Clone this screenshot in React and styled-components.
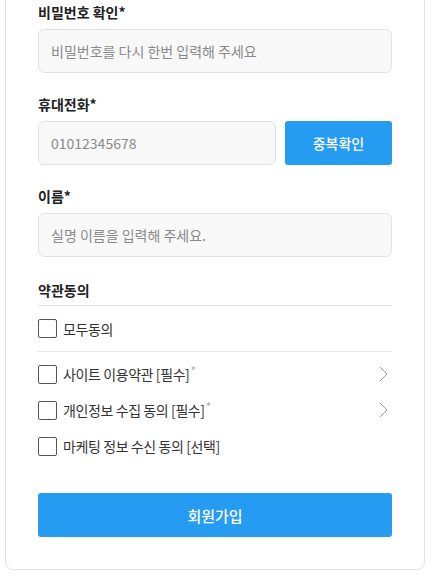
import React from "react";
import styled, { createGlobalStyle } from "styled-components";

const GlobalStyle = createGlobalStyle`
  html, body {
    margin: 0;
    padding: 0;
    background: #fff;
  }
  body {
    font-family: "Noto Sans CJK KR", "Noto Sans", sans-serif;
    color: #222;
  }
  * { box-sizing: border-box; }
`;

const Page = styled.div`
  padding: 0 7px 6px 5px;
`;

const Card = styled.div`
  border: 1px solid #dfe3ea;
  border-top: none;
  border-radius: 0 0 8px 8px;
  padding: 1px 32px 32px;
`;

const Field = styled.div`
  margin-bottom: 20px;
`;

const Label = styled.div`
  font-size: 14px;
  font-weight: 700;
  line-height: 22px;
  color: #222;
  margin-bottom: 6px;
`;

const Row = styled.div`
  display: flex;
  gap: 9px;
`;

const Input = styled.input`
  flex: 1;
  min-width: 0;
  width: 100%;
  height: 44px;
  padding: 0 12px;
  border: 1px solid #dfe3ea;
  border-radius: 6px;
  background: #f8f8f9;
  font-family: inherit;
  font-size: 14px;
  color: #333;
  outline: none;
  &::placeholder {
    color: #8a8a8a;
  }
`;

const BlueButton = styled.button`
  border: none;
  border-radius: 3px;
  background: #259cf2;
  color: #fff;
  font-family: inherit;
  font-size: ${(p) => (p.$big ? "15px" : "14px")};
  font-weight: 500;
  height: 44px;
  width: ${(p) => (p.$wide ? "100%" : "107px")};
  flex-shrink: 0;
  cursor: pointer;
`;

const TermsTitle = styled.div`
  font-size: 14px;
  font-weight: 700;
  line-height: 22px;
  padding-top: 2px;
  padding-bottom: 4px;
  border-bottom: 1px solid #e3e5e9;
`;

const AllRow = styled.label`
  display: flex;
  align-items: center;
  height: 46px;
  border-bottom: 1px solid #e3e5e9;
  margin-bottom: 4px;
`;

const TermRow = styled.label`
  display: flex;
  align-items: center;
  height: 36px;
`;

const Box = styled.span`
  width: 19px;
  height: 19px;
  border: 1px solid #555;
  border-radius: 2px;
  background: #fff;
  margin-right: 6px;
  flex-shrink: 0;
`;

const TermText = styled.span`
  flex: 1;
  font-size: 14px;
  letter-spacing: -0.4px;
  color: #333;
  line-height: 20px;
`;

const Star = styled.sup`
  color: #b5acb4;
  font-size: 12px;
  vertical-align: top;
  line-height: 14px;
  margin-left: 1px;
`;

const Arrow = styled.svg`
  width: 9px;
  height: 16px;
  margin-right: 4px;
  flex-shrink: 0;
`;

const Submit = styled.div`
  margin-top: 29px;
`;

const Chevron = () => (
  <Arrow viewBox="0 0 9 16">
    <path d="M1 1l7 7-7 7" fill="none" stroke="#9a9a9a" strokeWidth="1" />
  </Arrow>
);

const terms = [
  { text: "사이트 이용약관 [필수]", required: true },
  { text: "개인정보 수집 동의 [필수]", required: true },
  { text: "마케팅 정보 수신 동의 [선택]", required: false },
];

export default function App() {
  return (
    <Page>
      <GlobalStyle />
      <Card>
        <Field>
          <Label>비밀번호 확인*</Label>
          <Input type="password" placeholder="비밀번호를 다시 한번 입력해 주세요" />
        </Field>
        <Field>
          <Label>휴대전화*</Label>
          <Row>
            <Input placeholder="01012345678" />
            <BlueButton>중복확인</BlueButton>
          </Row>
        </Field>
        <Field>
          <Label>이름*</Label>
          <Input placeholder="실명 이름을 입력해 주세요." />
        </Field>
        <TermsTitle>약관동의</TermsTitle>
        <AllRow>
          <Box />
          <TermText>모두동의</TermText>
        </AllRow>
        {terms.map((t) => (
          <TermRow key={t.text}>
            <Box />
            <TermText>
              {t.text}
              {t.required && <Star>*</Star>}
            </TermText>
            {t.required && <Chevron />}
          </TermRow>
        ))}
        <Submit>
          <BlueButton $wide $big>회원가입</BlueButton>
        </Submit>
      </Card>
    </Page>
  );
}
